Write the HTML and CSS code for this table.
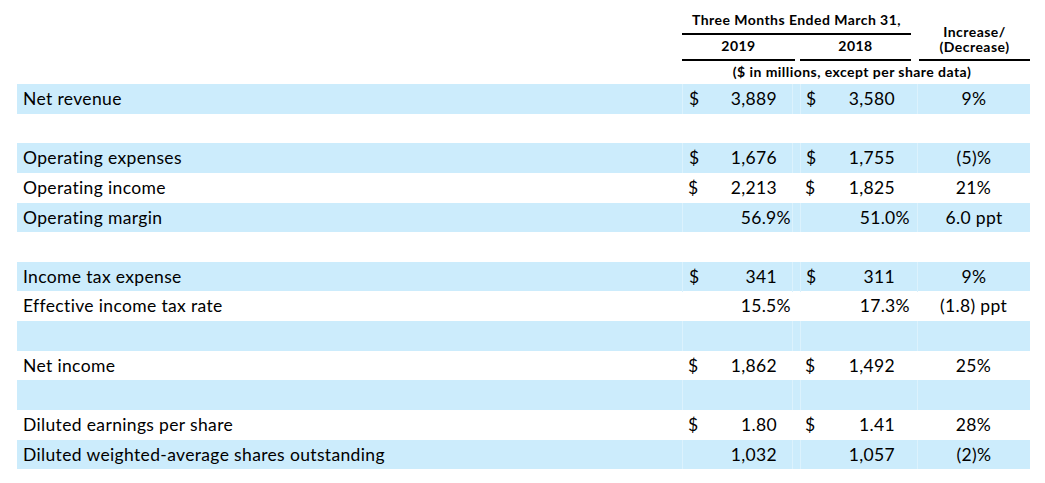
FILE: index.html
```html
<!DOCTYPE html>
<html lang="en">
<head>
<meta charset="utf-8">
<title>Three Months Ended March 31</title>
<link rel="stylesheet" href="styles.css">
</head>
<body>
<div class="report">
  <div class="head">
    <div class="h-period">Three Months Ended March 31,</div>
    <div class="h-year h-y1">2019</div>
    <div class="h-year h-y2">2018</div>
    <div class="h-change"><span>Increase/</span><span>(Decrease)</span></div>
    <div class="h-unit">($ in millions, except per share data)</div>
  </div>
  <div class="rows">
    <div class="row shade">
      <div class="label">Net revenue</div>
      <div class="c1"><span class="cur">$</span><span class="num">3,889</span></div><div class="sp"></div>
      <div class="c2"><span class="cur">$</span><span class="num">3,580</span></div>
      <div class="c3">9%</div>
    </div>
    <div class="row">
      <div class="label"></div><div class="c1"></div><div class="sp"></div><div class="c2"></div><div class="c3"></div>
    </div>
    <div class="row shade">
      <div class="label">Operating expenses</div>
      <div class="c1"><span class="cur">$</span><span class="num">1,676</span></div><div class="sp"></div>
      <div class="c2"><span class="cur">$</span><span class="num">1,755</span></div>
      <div class="c3">(5)%</div>
    </div>
    <div class="row">
      <div class="label">Operating income</div>
      <div class="c1"><span class="cur">$</span><span class="num">2,213</span></div><div class="sp"></div>
      <div class="c2"><span class="cur">$</span><span class="num">1,825</span></div>
      <div class="c3">21%</div>
    </div>
    <div class="row shade">
      <div class="label">Operating margin</div>
      <div class="c1 pct"><span class="num">56.9%</span></div><div class="sp"></div>
      <div class="c2 pct"><span class="num">51.0%</span></div>
      <div class="c3">6.0 ppt</div>
    </div>
    <div class="row">
      <div class="label"></div><div class="c1"></div><div class="sp"></div><div class="c2"></div><div class="c3"></div>
    </div>
    <div class="row shade">
      <div class="label">Income tax expense</div>
      <div class="c1"><span class="cur">$</span><span class="num">341</span></div><div class="sp"></div>
      <div class="c2"><span class="cur">$</span><span class="num">311</span></div>
      <div class="c3">9%</div>
    </div>
    <div class="row">
      <div class="label">Effective income tax rate</div>
      <div class="c1 pct"><span class="num">15.5%</span></div><div class="sp"></div>
      <div class="c2 pct"><span class="num">17.3%</span></div>
      <div class="c3">(1.8) ppt</div>
    </div>
    <div class="row shade">
      <div class="label"></div><div class="c1"></div><div class="sp"></div><div class="c2"></div><div class="c3"></div>
    </div>
    <div class="row">
      <div class="label">Net income</div>
      <div class="c1"><span class="cur">$</span><span class="num">1,862</span></div><div class="sp"></div>
      <div class="c2"><span class="cur">$</span><span class="num">1,492</span></div>
      <div class="c3">25%</div>
    </div>
    <div class="row shade">
      <div class="label"></div><div class="c1"></div><div class="sp"></div><div class="c2"></div><div class="c3"></div>
    </div>
    <div class="row">
      <div class="label">Diluted earnings per share</div>
      <div class="c1"><span class="cur">$</span><span class="num">1.80</span></div><div class="sp"></div>
      <div class="c2"><span class="cur">$</span><span class="num">1.41</span></div>
      <div class="c3">28%</div>
    </div>
    <div class="row shade">
      <div class="label">Diluted weighted-average shares outstanding</div>
      <div class="c1"><span class="num">1,032</span></div><div class="sp"></div>
      <div class="c2"><span class="num">1,057</span></div>
      <div class="c3">(2)%</div>
    </div>
  </div>
</div>
</body>
</html>
```
FILE: styles.css
```css
html, body {
  margin: 0;
  padding: 0;
  background: #ffffff;
}
body {
  font-family: "Lato", "Liberation Sans", sans-serif;
  color: #000000;
  width: 1045px;
  height: 483px;
  overflow: hidden;
}
.report {
  padding-left: 17px;
  width: 1013px;
}

/* ---------- header ---------- */
.head {
  display: grid;
  grid-template-columns: 665px 113px 5px 111px 8px 111px;
  grid-template-rows: 35px 26px 23px;
  font-weight: 700;
  font-size: 14px;
  letter-spacing: 0.45px;
}
.h-period {
  grid-column: 2 / 5;
  grid-row: 1;
  text-align: center;
  line-height: 18px;
  padding-top: 11px;
  border-bottom: 2px solid #000;
  box-sizing: border-box;
}
.h-year {
  grid-row: 2;
  text-align: center;
  line-height: 18px;
  padding-top: 2px;
  border-bottom: 2px solid #000;
  box-sizing: border-box;
}
.h-y1 { grid-column: 2; }
.h-y2 { grid-column: 4; }
.h-change {
  grid-column: 6;
  grid-row: 1 / 3;
  display: flex;
  flex-direction: column;
  justify-content: flex-end;
  align-items: center;
  line-height: 15px;
  padding-bottom: 5px;
  border-bottom: 2px solid #000;
  box-sizing: border-box;
}
.h-unit {
  grid-column: 2 / 7;
  grid-row: 3;
  text-align: center;
  line-height: 18px;
  padding-top: 2px;
  padding-right: 8px;
}

/* ---------- body rows ---------- */
.rows {
  font-size: 17.5px;
  letter-spacing: 0.35px;
}
.row {
  display: grid;
  grid-template-columns: 665px 110px 8px 117px 113px;
  height: 29.65px;
  line-height: 29.65px;
}
.row.shade {
  background: #ccecfc;
}
.row > div {
  box-sizing: border-box;
  white-space: nowrap;
}
.row.shade .c1,
.row.shade .sp,
.row.shade .c2,
.row.shade .c3 {
  border-left: 1px solid #dcf2fd;
}
.label {
  padding-left: 6px;
}
.c1, .c2 {
  display: flex;
}
.c1 {
  padding-left: 6px;
  padding-right: 15px;
}
.c2 {
  padding-left: 5px;
  padding-right: 22px;
}
.c1.pct { padding-right: 1px; }
.c2.pct { padding-right: 7px; }
.num {
  margin-left: auto;
}
.c3 {
  text-align: center;
}
```
